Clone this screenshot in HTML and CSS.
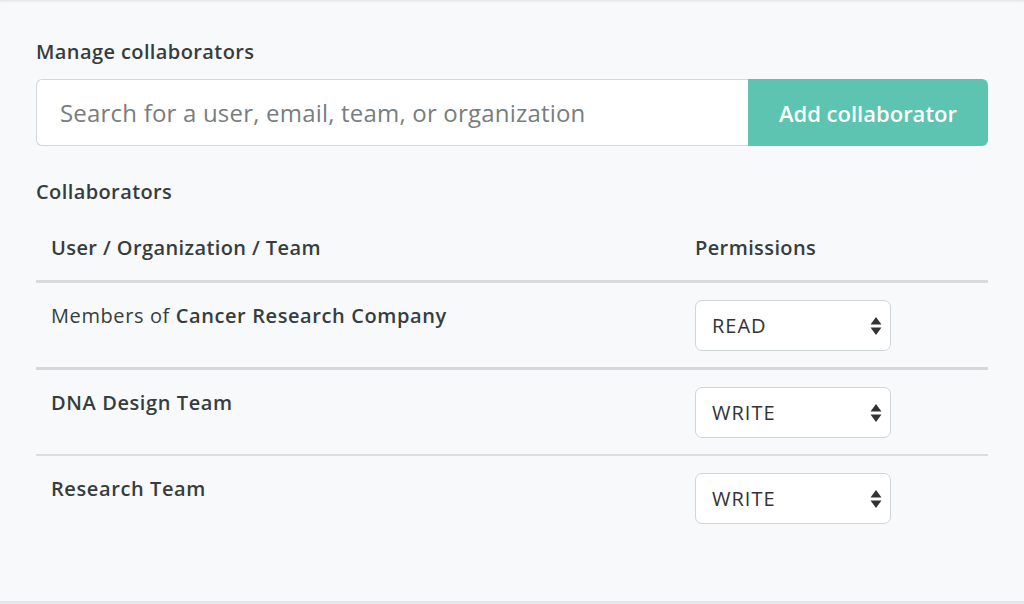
FILE: index.html
```html
<!DOCTYPE html>
<html lang="en">
<head>
<meta charset="utf-8">
<title>Manage collaborators</title>
<link rel="stylesheet" href="styles.css">
</head>
<body>
<div class="page">
  <h2 class="title">Manage collaborators</h2>
  <div class="search-row">
    <input class="search" type="text" placeholder="Search for a user, email, team, or organization">
    <button class="add-btn" type="button">Add collaborator</button>
  </div>
  <h3 class="subtitle">Collaborators</h3>
  <div class="table">
    <div class="row head">
      <div class="name">User / Organization / Team</div>
      <div class="perm">Permissions</div>
    </div>
    <div class="row thick">
      <div class="name">Members of <b>Cancer Research Company</b></div>
      <div class="perm"><div class="select"><span>READ</span><svg class="arrows" width="12" height="20" viewBox="0 0 12 20"><path d="M6 1 L11.5 8.5 H0.5 Z M6 19 L11.5 11.5 H0.5 Z" fill="#333"/></svg></div></div>
    </div>
    <div class="row">
      <div class="name"><b>DNA Design Team</b></div>
      <div class="perm"><div class="select"><span>WRITE</span><svg class="arrows" width="12" height="20" viewBox="0 0 12 20"><path d="M6 1 L11.5 8.5 H0.5 Z M6 19 L11.5 11.5 H0.5 Z" fill="#333"/></svg></div></div>
    </div>
    <div class="row last">
      <div class="name"><b>Research Team</b></div>
      <div class="perm"><div class="select"><span>WRITE</span><svg class="arrows" width="12" height="20" viewBox="0 0 12 20"><path d="M6 1 L11.5 8.5 H0.5 Z M6 19 L11.5 11.5 H0.5 Z" fill="#333"/></svg></div></div>
    </div>
  </div>
</div>
</body>
</html>
```

FILE: styles.css
```css
* { box-sizing: border-box; }
html, body { margin: 0; padding: 0; background: #f7f9fa; }
body {
  font-family: "Open Sans", "Lato", sans-serif;
  color: #363d40;
}
.page {
  height: 604px;
  padding: 40px 36px 0 36px;
  border-bottom: 3px solid #e3e7e9;
  box-shadow: inset 0 3px 3px -2px rgba(0,0,0,0.10);
}
.title {
  margin: 0;
  font-size: 20px;
  letter-spacing: 0.4px;
  font-weight: 600;
  line-height: 24px;
}
.search-row {
  display: flex;
  margin-top: 15px;
  height: 67px;
}
.search {
  flex: 1;
  height: 67px;
  border: 1px solid #d3d8da;
  border-right: none;
  border-radius: 6px 0 0 6px;
  background: #fff;
  padding: 0 0 0 23px;
  font-family: inherit;
  font-size: 24px;
  letter-spacing: 0.2px;
  color: #333;
  outline: none;
}
.search::placeholder { color: #787d80; }
.add-btn {
  width: 240px;
  height: 67px;
  border: none;
  border-radius: 0 6px 6px 0;
  background: #5cc4b0;
  color: #fff;
  font-family: inherit;
  font-size: 22px;
  font-weight: 600;
  padding: 0;
}
.subtitle {
  margin: 34px 0 0 0;
  font-size: 20px;
  letter-spacing: 0.4px;
  font-weight: 600;
  line-height: 24px;
}
.table { margin-top: 32px; }
.row {
  display: flex;
  align-items: flex-start;
  padding: 17px 0 16px 15px;
  border-bottom: 2px solid #dadedf;
}
.row.head {
  padding: 0 0 20px 15px;
  border-bottom: 3px solid #d6dbdc;
  font-weight: 600;
}
.row.thick { border-bottom-width: 3px; border-bottom-color: #d4d8da; }
.row.last { border-bottom: none; }
.name {
  flex: 1;
  font-size: 20px;
  letter-spacing: 0.6px;
  line-height: 32px;
}
.head .name, .head .perm { line-height: 24px; font-size: 20px; letter-spacing: 0.4px; }
.name b { font-weight: 600; }
.perm {
  width: 293px;
  font-size: 20px;
}
.select {
  width: 196px;
  height: 51px;
  background: #fff;
  border: 1px solid #d0d5d7;
  border-radius: 7px;
  display: flex;
  align-items: center;
  justify-content: space-between;
  padding: 0 8px 0 16px;
  font-size: 20px;
  letter-spacing: 1px;
  color: #333;
}
.arrows { display: block; }
```
